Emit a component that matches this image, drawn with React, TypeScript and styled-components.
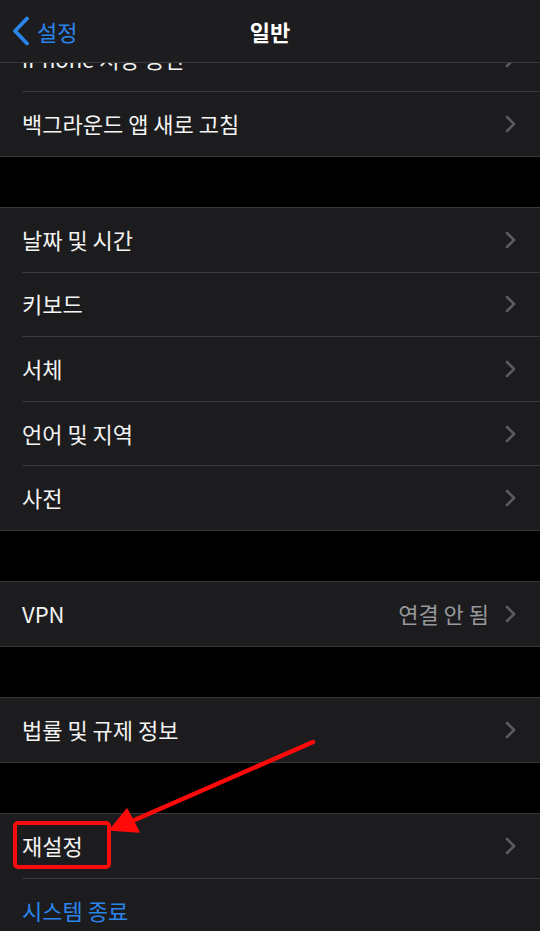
import React from "react";
import styled, { createGlobalStyle } from "styled-components";

const Global = createGlobalStyle`
  html, body { margin: 0; padding: 0; background: #000; }
  body { font-family: "Noto Sans CJK KR", "Noto Sans", sans-serif; -webkit-font-smoothing: antialiased; }
  * { box-sizing: border-box; }
`;

const Page = styled.div`
  position: relative;
  width: 540px;
  height: 931px;
  overflow: hidden;
  background: #000;
  display: flex;
  flex-direction: column;
`;

const NavBar = styled.header`
  flex: 0 0 auto;
  height: 63px;
  background: #1d1d1f;
  border-bottom: 1px solid #3a3a3c;
  display: grid;
  grid-template-columns: 1fr auto 1fr;
  align-items: center;
  padding: 0 0 0 12px;
`;

const Back = styled.div`
  display: flex;
  align-items: center;
  gap: 7px;
  color: #2a84ea;
  font-size: 22px;
  line-height: 1;
`;

const Title = styled.div`
  color: #fff;
  font-size: 22px;
  font-weight: 700;
  text-align: center;
  margin-left: -12px;
`;

const Content = styled.main`
  flex: 1 1 auto;
  overflow: hidden;
  display: flex;
  flex-direction: column;
  gap: 50.4px;
`;

const Group = styled.section<{ $clipTop?: boolean; $last?: boolean }>`
  background: #1c1c1e;
  border-top: 1px solid #38383a;
  border-bottom: ${(p) => (p.$last ? "none" : "1px solid #38383a")};
  margin-top: ${(p) => (p.$clipTop ? "-36.6px" : "0")};
  display: flex;
  flex-direction: column;
`;

const Row = styled.div`
  height: 63.6px;
  flex: 0 0 auto;
  display: flex;
  align-items: center;
  padding: 0 24px 0 22px;
`;

const Label = styled.span<{ $blue?: boolean }>`
  flex: 1 1 auto;
  color: ${(p) => (p.$blue ? "#2a84ea" : "#f4f4f4")};
  font-size: 22px;
  white-space: nowrap;
  margin-top: -2px;
`;

const Value = styled.span`
  color: #98989d;
  font-size: 22px;
  margin-right: 16px;
  margin-top: -2px;
  white-space: nowrap;
`;

const Separator = styled.div`
  height: 1px;
  margin-left: 22px;
  background: #38383a;
  flex: 0 0 auto;
`;

const Overlay = styled.svg`
  position: absolute;
  left: 0;
  top: 0;
  pointer-events: none;
`;

const Chevron = () => (
  <svg width="11" height="18" viewBox="0 0 11 18">
    <path d="M2 2 L9 9 L2 16" fill="none" stroke="#5c5c60" strokeWidth="2.6" strokeLinecap="round" strokeLinejoin="round" />
  </svg>
);

const BackChevron = () => (
  <svg width="18" height="30" viewBox="0 0 18 30">
    <path d="M15 2.5 L3 15 L15 27.5" fill="none" stroke="#2a84ea" strokeWidth="3.8" strokeLinecap="round" strokeLinejoin="round" />
  </svg>
);

type Item = { label: string; value?: string; blue?: boolean; noChevron?: boolean };

const groups: { items: Item[]; clipTop?: boolean; last?: boolean }[] = [
  { clipTop: true, items: [{ label: "iPhone 저장 공간" }, { label: "백그라운드 앱 새로 고침" }] },
  {
    items: [
      { label: "날짜 및 시간" },
      { label: "키보드" },
      { label: "서체" },
      { label: "언어 및 지역" },
      { label: "사전" },
    ],
  },
  { items: [{ label: "VPN", value: "연결 안 됨" }] },
  { items: [{ label: "법률 및 규제 정보" }] },
  { last: true, items: [{ label: "재설정" }, { label: "시스템 종료", blue: true, noChevron: true }] },
];

export default function App() {
  return (
    <>
      <Global />
      <Page>
        <NavBar>
          <Back>
            <BackChevron />
            <span>설정</span>
          </Back>
          <Title>일반</Title>
          <div />
        </NavBar>
        <Content>
          {groups.map((g, gi) => (
            <Group key={gi} $clipTop={g.clipTop} $last={g.last}>
              {g.items.map((it, i) => (
                <React.Fragment key={it.label}>
                  {i > 0 && <Separator />}
                  <Row>
                    <Label $blue={it.blue}>{it.label}</Label>
                    {it.value && <Value>{it.value}</Value>}
                    {!it.noChevron && <Chevron />}
                  </Row>
                </React.Fragment>
              ))}
            </Group>
          ))}
        </Content>
        <Overlay width="540" height="931" viewBox="0 0 540 931">
          <rect x="15" y="823" width="94" height="44" rx="3" fill="none" stroke="#ff0a0a" strokeWidth="4" />
          <line x1="313" y1="742" x2="130" y2="822" stroke="#ff0a0a" strokeWidth="4.5" strokeLinecap="round" />
          <polygon points="110,830 127,809 139,832" fill="#ff0a0a" stroke="#ff0a0a" strokeWidth="1.5" strokeLinejoin="round" />
        </Overlay>
      </Page>
    </>
  );
}
